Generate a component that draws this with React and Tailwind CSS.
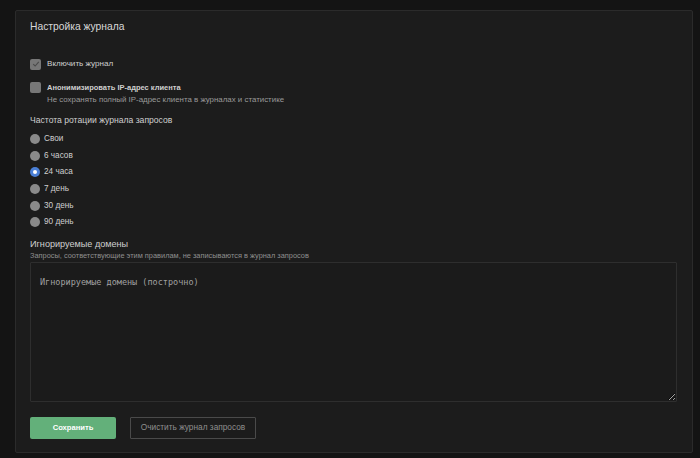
import React from "react";

const radios = ["Свои", "6 часов", "24 часа", "7 день", "30 день", "90 день"];

export default function App() {
  return (
    <div
      className="w-[700px] h-[458px] bg-[#141414] pt-[10px] pl-[15px] pr-[7px] pb-[5px]"
      style={{ fontFamily: '"Liberation Sans", Arial, sans-serif' }}
    >
      <div className="h-[443px] bg-[#1c1c1c] border border-[#2b2b2b] rounded-[2px] pl-[14px] pr-[15px] flex flex-col">
        <div className="pt-[7px] h-[36px] text-[10.3px] text-[#d8d8d8] leading-[18px]">Настройка журнала</div>

        <label className="mt-[11px] flex items-center gap-[6px] h-[12px]">
          <span className="w-[11px] h-[11px] rounded-[2px] bg-[#777] flex items-center justify-center">
            <svg width="8" height="8" viewBox="0 0 8 8" fill="none">
              <path d="M1.2 4.2 L3.1 6 L6.8 1.8" stroke="#4a4a4a" strokeWidth="1.1" />
            </svg>
          </span>
          <span className="text-[8.1px] text-[#cfcfcf]">Включить журнал</span>
        </label>

        <div className="mt-[11px] flex gap-[6px]">
          <span className="mt-[1px] w-[11px] h-[11px] rounded-[2px] bg-[#777]"></span>
          <div className="flex flex-col">
            <span className="text-[7.5px] font-bold text-[#cfcfcf] leading-[13px]">Анонимизировать IP-адрес клиента</span>
            <span className="text-[7.9px] text-[#9a9a9a] leading-[12px]">Не сохранять полный IP-адрес клиента в журналах и статистике</span>
          </div>
        </div>

        <div className="mt-[7px] text-[8.6px] text-[#cfcfcf] leading-[14px]">Частота ротации журнала запросов</div>
        <div className="mt-[4px] flex flex-col">
          {radios.map((r, i) => (
            <div key={r} className="h-[16.6px] flex items-center gap-[4px]">
              {i === 2 ? (
                <span className="w-[10px] h-[10px] rounded-full bg-[#4a7fd6] flex items-center justify-center">
                  <span className="w-[4px] h-[4px] rounded-full bg-white"></span>
                </span>
              ) : (
                <span className="w-[10px] h-[10px] rounded-full bg-[#8a8a8a]"></span>
              )}
              <span className="text-[8.2px] text-[#cfcfcf]">{r}</span>
            </div>
          ))}
        </div>

        <div className="mt-[6px] text-[9.1px] text-[#cfcfcf] leading-[14px]">Игнорируемые домены</div>
        <div className="text-[7.4px] text-[#8f8f8f] leading-[10px]">
          Запросы, соответствующие этим правилам, не записываются в журнал запросов
        </div>
        <textarea
          className="mt-[1px] h-[140px] w-full bg-[#1b1b1b] border border-[#2e2e2e] rounded-[1px] px-[9px] py-[14px] text-[8.5px] leading-[10px] text-[#cfcfcf] placeholder:text-[#a0a0a0] outline-none"
          style={{ fontFamily: '"DejaVu Sans Mono", "Liberation Mono", monospace' }}
          placeholder="Игнорируемые домены (построчно)"
        ></textarea>

        <div className="mt-[15px] flex gap-[14px]">
          <button className="w-[86px] h-[22px] rounded-[2px] bg-[#63b07a] text-white text-[7.6px] font-bold">
            Сохранить
          </button>
          <button className="w-[126px] h-[22px] rounded-[1px] border border-[#4a4a4a] text-[#8e8e8e] text-[8.3px]">
            Очистить журнал запросов
          </button>
        </div>
      </div>
    </div>
  );
}
